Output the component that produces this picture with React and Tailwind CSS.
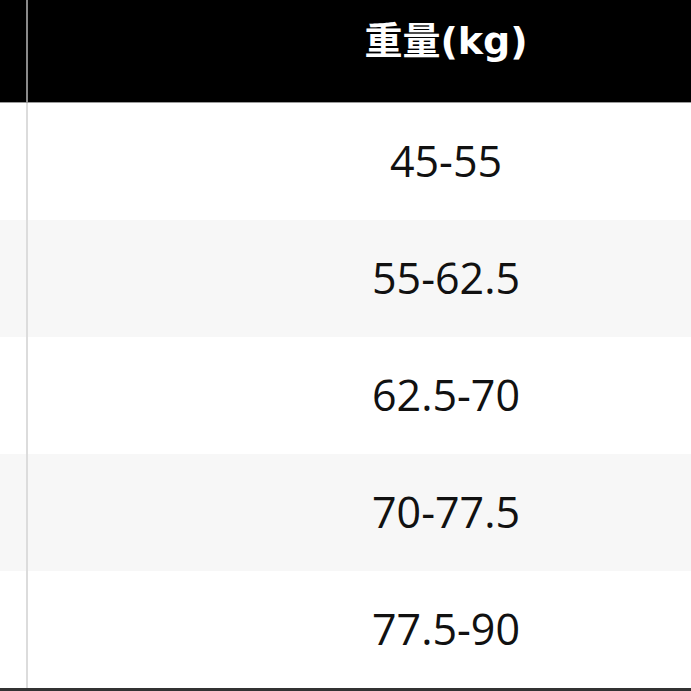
import React from 'react';

const rows = ['45-55', '55-62.5', '62.5-70', '70-77.5', '77.5-90'];

const App = () => {
    return (
        <div className="w-[691px] h-[691px] overflow-hidden bg-white">
            <div className="w-[864px]">
                <div className="flex h-[103px] bg-black border-b border-[#9a9a9a]">
                    <div className="w-[28px] border-r-2 border-[#8a8a8a]"></div>
                    <div className="flex-1 flex justify-center pt-[17px] text-white font-bold text-[38px] leading-[48px] font-['DejaVu_Sans','Noto_Sans_CJK_SC',sans-serif]">
                        重量(kg)
                    </div>
                </div>
                {rows.map((r, i) => (
                    <div key={r} className={`flex h-[117px] ${i % 2 === 1 ? 'bg-[#f7f7f7]' : 'bg-white'}`}>
                        <div className="w-[28px] border-r-2 border-[#dcdcdc]"></div>
                        <div className="flex-1 flex items-center justify-center text-[43px] text-[#111] font-['Open_Sans',sans-serif]">
                            {r}
                        </div>
                    </div>
                ))}
                <div className="h-[3px] bg-[#333]"></div>
            </div>
        </div>
    );
};

export default App;
